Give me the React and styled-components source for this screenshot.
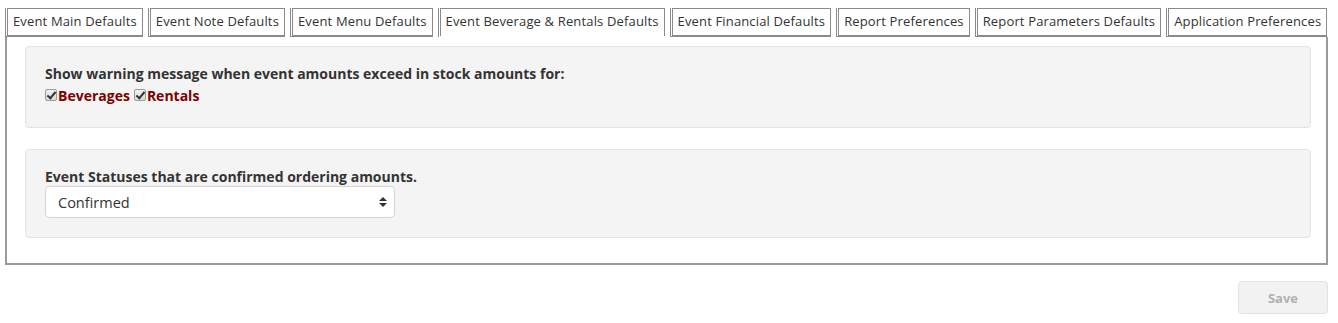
import React, { useState } from 'react';
import styled, { createGlobalStyle } from 'styled-components';

const GlobalStyle = createGlobalStyle`
  body {
    margin: 0;
    padding: 8px 10px 0 5px;
    background: #fff;
    font-family: "Open Sans", "Liberation Sans", sans-serif;
    color: #333;
  }
`;

const TabBar = styled.ul`
  display: flex;
  gap: 4px;
  list-style: none;
  margin: 0;
  padding: 0;
`;

const TabItem = styled.li`
  display: flex;
  border-left: 1px solid #8a8a8a;
  border-bottom: ${p => (p.active ? '0' : '1px solid #8a8a8a')};
  padding: 0 0 ${p => (p.active ? '1px' : '0')} 1px;
  margin-right: 1px;
`;

const TabLink = styled.a`
  display: block;
  border: 1px solid #8a8a8a;
  border-bottom: ${p => (p.active ? '0' : '1px solid #8a8a8a')};
  background: #fff;
  padding: 4px 5px ${p => (p.active ? '6px' : '5px')};
  font-size: 13px;
  letter-spacing: 0.15px;
  line-height: 17px;
  color: #333;
  white-space: nowrap;
  cursor: pointer;
`;

const Panel = styled.div`
  border: 2px solid #9a9a9a;
  border-top: 0;
  padding: 9px 15px 25px 18px;
  display: flex;
  flex-direction: column;
  gap: 21px;
`;

const Card = styled.div`
  background: #f4f4f4;
  border: 1px solid #e3e3e3;
  border-radius: 4px;
  padding: 18px 19px ${p => p.bottom || 19}px;
`;

const Label = styled.div`
  font-size: 14px;
  font-weight: 700;
  line-height: 18px;
  color: #333;
`;

const CheckRow = styled.div`
  display: flex;
  align-items: center;
  height: 20px;
  margin-top: 2px;
`;

const CheckLabel = styled.label`
  display: flex;
  align-items: center;
  font-size: 14px;
  font-weight: 700;
  color: #800000;
  margin-right: 4px;
  cursor: pointer;
`;

const Box = styled.input`
  appearance: none;
  position: relative;
  width: 12px;
  height: 12px;
  margin: 0 1px 0 0;
  border: 1px solid #9c9c9c;
  border-radius: 2px;
  background: linear-gradient(#f2f2f2, #d9d9d9);
  &:checked::after {
    content: '';
    position: absolute;
    left: 3px;
    top: 0px;
    width: 3px;
    height: 7px;
    border: solid #333;
    border-width: 0 2px 2px 0;
    transform: rotate(40deg);
  }
`;

const SelectWrap = styled.div`
  position: relative;
  width: 350px;
`;

const Select = styled.select`
  appearance: none;
  width: 100%;
  height: 32px;
  border: 1px solid #d4d4d4;
  border-radius: 4px;
  background: #fff;
  padding: 0 12px;
  font-family: "Open Sans", "Liberation Sans", sans-serif;
  font-size: 14.5px;
  color: #333;
  outline: none;
`;

const Arrows = styled.svg`
  position: absolute;
  right: 8px;
  top: 11px;
  pointer-events: none;
`;

const Footer = styled.div`
  display: flex;
  justify-content: flex-end;
  padding-top: 16px;
`;

const SaveButton = styled.button`
  width: 90px;
  height: 33px;
  border: 1px solid #e2e2e2;
  border-radius: 4px;
  background: #f2f2f2;
  color: #b0b0b0;
  font-family: "Open Sans", "Liberation Sans", sans-serif;
  font-size: 13px;
  font-weight: 700;
`;

const tabs = [
  'Event Main Defaults',
  'Event Note Defaults',
  'Event Menu Defaults',
  'Event Beverage & Rentals Defaults',
  'Event Financial Defaults',
  'Report Preferences',
  'Report Parameters Defaults',
  'Application Preferences',
];

export default function App() {
  const [active, setActive] = useState(3);
  const [beverages, setBeverages] = useState(true);
  const [rentals, setRentals] = useState(true);

  return (
    <>
      <GlobalStyle />
      <TabBar>
        {tabs.map((t, i) => (
          <TabItem key={t} active={i === active}>
            <TabLink active={i === active} onClick={() => setActive(i)}>{t}</TabLink>
          </TabItem>
        ))}
      </TabBar>
      <Panel>
        <Card bottom={22}>
          <Label>Show warning message when event amounts exceed in stock amounts for:</Label>
          <CheckRow>
            <CheckLabel>
              <Box type="checkbox" checked={beverages} onChange={e => setBeverages(e.target.checked)} />
              Beverages
            </CheckLabel>
            <CheckLabel>
              <Box type="checkbox" checked={rentals} onChange={e => setRentals(e.target.checked)} />
              Rentals
            </CheckLabel>
          </CheckRow>
        </Card>
        <Card>
          <Label>Event Statuses that are confirmed ordering amounts.</Label>
          <SelectWrap>
            <Select defaultValue="Confirmed">
              <option>Confirmed</option>
              <option>Tentative</option>
              <option>Prospect</option>
            </Select>
            <Arrows width="8" height="10" viewBox="0 0 8 10">
              <path d="M4 0 L8 4 H0 Z M4 10 L8 6 H0 Z" fill="#333" />
            </Arrows>
          </SelectWrap>
        </Card>
      </Panel>
      <Footer>
        <SaveButton disabled>Save</SaveButton>
      </Footer>
    </>
  );
}
